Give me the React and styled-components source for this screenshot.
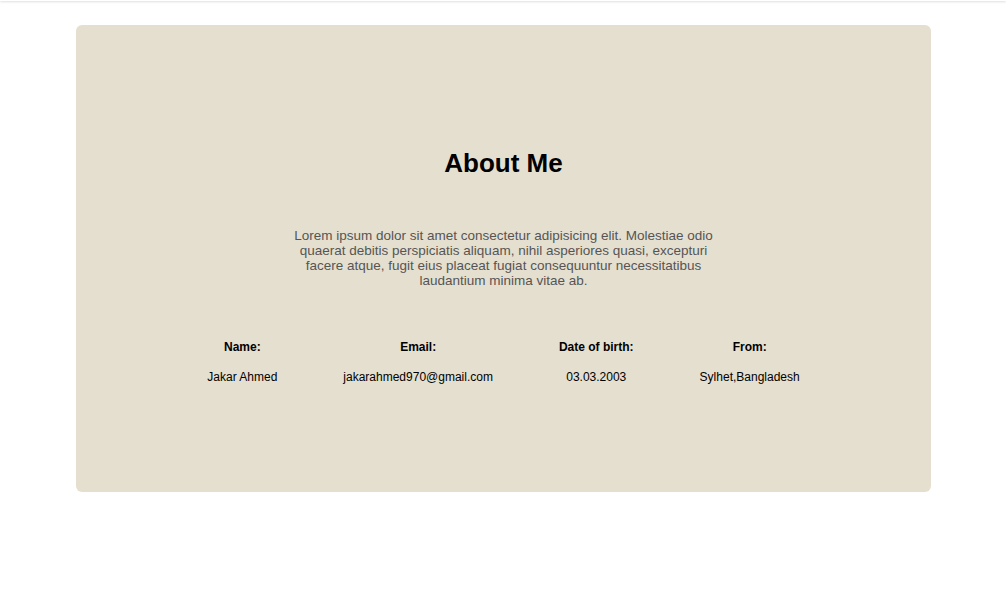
import React from 'react'
import styled, { createGlobalStyle } from 'styled-components'

const GlobalStyle = createGlobalStyle`
  * { box-sizing: border-box; }
  body {
    margin: 0;
    background: #ffffff;
    font-family: "Liberation Sans", Arial, sans-serif;
  }
`

const TopBar = styled.div`
  height: 1px;
  box-shadow: 0 0 3px rgba(0, 0, 0, 0.4);
`

const Section = styled.section`
  padding: 24px 75px 0 76px;
`

const Card = styled.div`
  width: 855px;
  height: 467px;
  background: #e5dfcf;
  border-radius: 6px;
  padding-top: 123px;
  display: flex;
  flex-direction: column;
  align-items: center;
`

const Title = styled.h2`
  margin: 0;
  font-size: 26px;
  line-height: 30px;
  font-weight: bold;
  color: #000;
`

const Text = styled.p`
  margin: 50px 0 0;
  width: 432px;
  font-size: 13.5px;
  line-height: 15px;
  color: #555;
  text-align: center;
`

const InfoRow = styled.div`
  margin-top: 52px;
  display: flex;
  justify-content: center;
  gap: 66px;
`

const InfoItem = styled.div`
  display: flex;
  flex-direction: column;
  align-items: center;
  gap: 16px;
  font-size: 12px;
  line-height: 14px;
  color: #000;
`

const Label = styled.span`
  font-weight: bold;
`

const info = [
  ['Name:', 'Jakar Ahmed'],
  ['Email:', 'jakarahmed970@gmail.com'],
  ['Date of birth:', '03.03.2003'],
  ['From:', 'Sylhet,Bangladesh'],
]

export default function App() {
  return (
    <>
      <GlobalStyle />
      <TopBar />
      <Section>
        <Card>
          <Title>About Me</Title>
          <Text>
            Lorem ipsum dolor sit amet consectetur adipisicing elit. Molestiae odio quaerat debitis
            perspiciatis aliquam, nihil asperiores quasi, excepturi facere atque, fugit eius placeat
            fugiat consequuntur necessitatibus laudantium minima vitae ab.
          </Text>
          <InfoRow>
            {info.map(([label, value]) => (
              <InfoItem key={label}>
                <Label>{label}</Label>
                <span>{value}</span>
              </InfoItem>
            ))}
          </InfoRow>
        </Card>
      </Section>
    </>
  )
}
